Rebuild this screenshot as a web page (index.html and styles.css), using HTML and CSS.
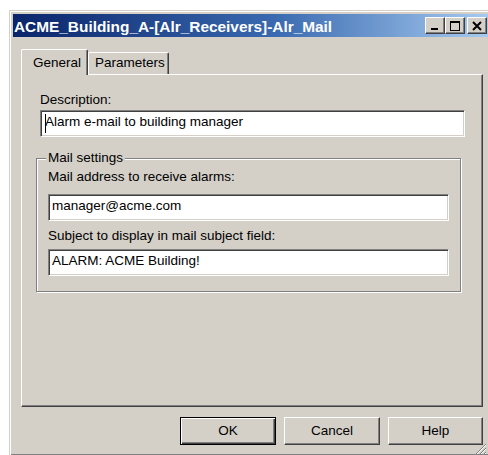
FILE: index.html
```html
<!DOCTYPE html>
<html>
<head>
<meta charset="utf-8">
<title>ACME_Building_A-[Alr_Receivers]-Alr_Mail</title>
<link rel="stylesheet" href="styles.css">
</head>
<body>
<div class="window">
  <div class="titlebar">
    <span class="title">ACME_Building_A-[Alr_Receivers]-Alr_Mail</span>
    <div class="caption-buttons">
      <div class="cap">
        <svg width="12" height="10" viewBox="0 0 12 10"><rect x="2" y="7" width="7" height="2" fill="#000"/></svg>
      </div>
      <div class="cap">
        <svg width="12" height="10" viewBox="0 0 12 10"><rect x="1.5" y="0.5" width="9" height="9" fill="none" stroke="#000"/><rect x="1" y="0" width="10" height="2" fill="#000"/></svg>
      </div>
      <div class="cap close">
        <svg width="12" height="10" viewBox="0 0 12 10"><path d="M2 1 L10 9 M10 1 L2 9" stroke="#000" stroke-width="2" fill="none"/></svg>
      </div>
    </div>
  </div>

  <div class="client">
    <div class="tabs">
      <div class="tab active">General</div>
      <div class="tab">Parameters</div>
    </div>

    <div class="panel">
      <div class="label">Description:</div>
      <div class="field field-desc"><span class="caret"></span>Alarm e-mail to building manager</div>

      <fieldset class="group">
        <legend>Mail settings</legend>
        <div class="label label-mail">Mail address to receive alarms:</div>
        <div class="field field-mail">manager@acme.com</div>
        <div class="label label-subject">Subject to display in mail subject field:</div>
        <div class="field field-subject">ALARM: ACME Building!</div>
      </fieldset>
    </div>

    <div class="buttons">
      <div class="btn default">OK</div>
      <div class="btn">Cancel</div>
      <div class="btn btn-help">Help</div>
    </div>
  </div>

  <svg class="grip" width="12" height="12" viewBox="0 0 12 12">
    <path d="M11 1 L1 11 M11 5 L5 11 M11 9 L9 11" stroke="#808080" stroke-width="1" fill="none"/>
    <path d="M11 2 L2 11 M11 6 L6 11 M11 10 L10 11" stroke="#ffffff" stroke-width="1" fill="none"/>
  </svg>
</div>
</body>
</html>
```

FILE: styles.css
```css
html, body {
  margin: 0;
  height: 100%;
  overflow: hidden;
  background: #ffffff;
}

body {
  font-family: "Liberation Sans", Arial, sans-serif;
  font-size: 13.5px;
  color: #000;
}

/* dialog frame */
.window {
  position: relative;
  margin: 10px 0 0 9px;
  width: 484px;
  height: 446px;
  box-sizing: border-box;
  background: #d4d0c8;
  border: 1px solid;
  border-color: #d4d0c8 #404040 #404040 #d4d0c8;
  box-shadow: inset 1px 1px #ffffff, inset -1px -1px #808080;
  padding: 3px;
  display: flex;
  flex-direction: column;
}

/* caption */
.titlebar {
  height: 23px;
  flex: none;
  display: flex;
  align-items: center;
  padding: 0 2px 0 1px;
  background: linear-gradient(to right, #0a246a 0%, #3a6ab0 55%, #a6caf0 100%);
}

.title {
  flex: 1;
  color: #ffffff;
  font-weight: bold;
  font-size: 15.4px;
  white-space: nowrap;
  padding-top: 2px;
}

.caption-buttons {
  display: flex;
}

.cap {
  width: 20px;
  height: 17px;
  box-sizing: border-box;
  background: #d4d0c8;
  border: 1px solid;
  border-color: #ffffff #404040 #404040 #ffffff;
  box-shadow: inset -1px -1px #808080;
  display: flex;
  align-items: center;
  justify-content: center;
}

.cap svg {
  display: block;
}

.cap.close {
  margin-left: 2px;
}

/* client area */
.client {
  flex: 1;
  display: flex;
  flex-direction: column;
  padding: 12px 6px 0 8px;
}

/* tab strip */
.tabs {
  display: flex;
  align-items: flex-end;
  height: 25px;
  position: relative;
  z-index: 1;
}

.tab {
  box-sizing: border-box;
  height: 22px;
  padding: 2px 3px 0 6px;
  line-height: 16px;
  background: #d4d0c8;
  border-top: 1px solid #ffffff;
  border-left: 1px solid #ffffff;
  border-right: 1px solid #404040;
  box-shadow: inset -1px 0 #808080;
  border-top-left-radius: 2px;
  border-top-right-radius: 2px;
  white-space: nowrap;
}

.tab.active {
  height: 26px;
  margin-bottom: -1px;
  padding: 5px 6px 0 11px;
}

/* tab page */
.panel {
  flex: none;
  height: 333px;
  box-sizing: border-box;
  border: 1px solid;
  border-color: #ffffff #404040 #404040 #ffffff;
  box-shadow: inset -1px -1px #808080;
  padding: 17px 17px 0 18px;
}

.label {
  line-height: 16px;
  white-space: nowrap;
}

.field {
  position: relative;
  height: 27px;
  box-sizing: border-box;
  margin-top: 2px;
  background: #ffffff;
  border: 1px solid;
  border-color: #808080 #ffffff #ffffff #808080;
  box-shadow: inset 1px 1px #404040, inset -1px -1px #d4d0c8;
  padding: 3px 3px 0 4px;
  line-height: 16px;
  white-space: nowrap;
}

.caret {
  position: absolute;
  left: 4px;
  top: 3px;
  width: 1px;
  height: 19px;
  background: #000;
}

/* group box */
.group {
  margin: 14px 4px 0 -4px;
  border: 1px solid #808080;
  box-shadow: inset 1px 1px #ffffff, 1px 1px #ffffff;
  padding: 4px 11px 15px 11px;
}

.group legend {
  padding: 0 2px;
  margin-left: -2px;
  line-height: 14px;
  background: #d4d0c8;
}

.group .field {
  padding-left: 3px;
}

.label-mail {
  margin-top: 0;
}

.field-mail {
  margin-top: 9px;
}

.label-subject {
  margin-top: 7px;
}

.field-subject {
  margin-top: 5px;
}

/* dialog buttons */
.buttons {
  display: flex;
  justify-content: flex-end;
  gap: 8px;
  margin-top: 10px;
}

.btn {
  width: 96px;
  height: 28px;
  box-sizing: border-box;
  border: 1px solid;
  border-color: #ffffff #404040 #404040 #ffffff;
  box-shadow: inset -1px -1px #808080;
  display: flex;
  align-items: center;
  justify-content: center;
  line-height: 16px;
}

.btn.default {
  border-color: #000000;
  box-shadow: inset 1px 1px #ffffff, inset -1px -1px #404040, inset -2px -2px #808080;
}

.btn-help {
  width: 95px;
}

/* size grip in the lower right corner */
.grip {
  position: absolute;
  right: 5px;
  bottom: 0;
}
```
